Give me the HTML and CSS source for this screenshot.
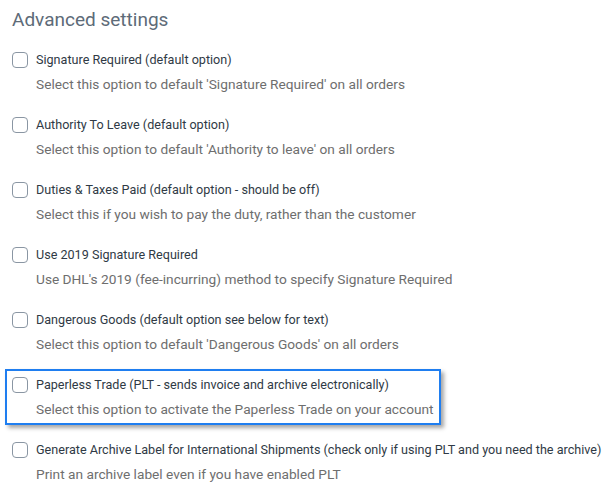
FILE: index.html
```html
<!DOCTYPE html>
<html lang="en">
    <head>
        <meta charset="utf-8">
        <title>Advanced settings</title>
        <link rel="stylesheet" href="styles.css">
    </head>
    <body>
        <div id="settingsPanel">
            <h2 class="panelTitle">Advanced settings</h2>
            <div class="optionList">
                <label class="option">
                    <span class="checkBox"></span>
                    <span class="optionText">
                        <span class="optionLabel">Signature Required (default option)</span>
                        <span class="optionHint">Select this option to default 'Signature Required' on all orders</span>
                    </span>
                </label>
                <label class="option">
                    <span class="checkBox"></span>
                    <span class="optionText">
                        <span class="optionLabel">Authority To Leave (default option)</span>
                        <span class="optionHint">Select this option to default 'Authority to leave' on all orders</span>
                    </span>
                </label>
                <label class="option">
                    <span class="checkBox"></span>
                    <span class="optionText">
                        <span class="optionLabel">Duties &amp; Taxes Paid (default option - should be off)</span>
                        <span class="optionHint">Select this if you wish to pay the duty, rather than the customer</span>
                    </span>
                </label>
                <label class="option">
                    <span class="checkBox"></span>
                    <span class="optionText">
                        <span class="optionLabel">Use 2019 Signature Required</span>
                        <span class="optionHint">Use DHL's 2019 (fee-incurring) method to specify Signature Required</span>
                    </span>
                </label>
                <label class="option">
                    <span class="checkBox"></span>
                    <span class="optionText">
                        <span class="optionLabel">Dangerous Goods (default option see below for text)</span>
                        <span class="optionHint">Select this option to default 'Dangerous Goods' on all orders</span>
                    </span>
                </label>
                <label class="option highlighted">
                    <span class="checkBox"></span>
                    <span class="optionText">
                        <span class="optionLabel">Paperless Trade (PLT - sends invoice and archive electronically)</span>
                        <span class="optionHint">Select this option to activate the Paperless Trade on your account</span>
                    </span>
                </label>
                <label class="option">
                    <span class="checkBox"></span>
                    <span class="optionText">
                        <span class="optionLabel">Generate Archive Label for International Shipments (check only if using PLT and you need the archive)</span>
                        <span class="optionHint">Print an archive label even if you have enabled PLT</span>
                    </span>
                </label>
            </div>
        </div>
    </body>
</html>
```

FILE: styles.css
```css
body {
    margin: 0;
    background: white;
    font-family: Roboto, "Liberation Sans", sans-serif;
}
#settingsPanel {
    padding: 8px 0 0 12px;
}
.panelTitle {
    margin: 0 0 18px 0;
    font-size: 19px;
    font-weight: normal;
    line-height: 24px;
    color: #5d6b78;
}
.optionList {
    display: flex;
    flex-direction: column;
    align-items: flex-start;
    gap: 21px;
}
.option {
    display: flex;
    gap: 8px;
}
.checkBox {
    width: 14px;
    height: 14px;
    margin-top: 2px;
    border: 1px solid #8a96a3;
    border-radius: 4px;
    background: white;
    flex-shrink: 0;
}
.optionText {
    display: flex;
    flex-direction: column;
    gap: 4px;
}
.optionLabel {
    font-size: 12.6px;
    line-height: 20px;
    color: #2f3a45;
}
.optionHint {
    font-size: 13.7px;
    line-height: 20px;
    color: #6e6e6e;
}
.highlighted {
    margin: -6px 0 -6px -7px;
    padding: 4px 5px;
    border: 2px solid #1f7ef0;
    box-shadow: 3px 3px 4px rgba(0, 0, 0, 0.35);
}
```
